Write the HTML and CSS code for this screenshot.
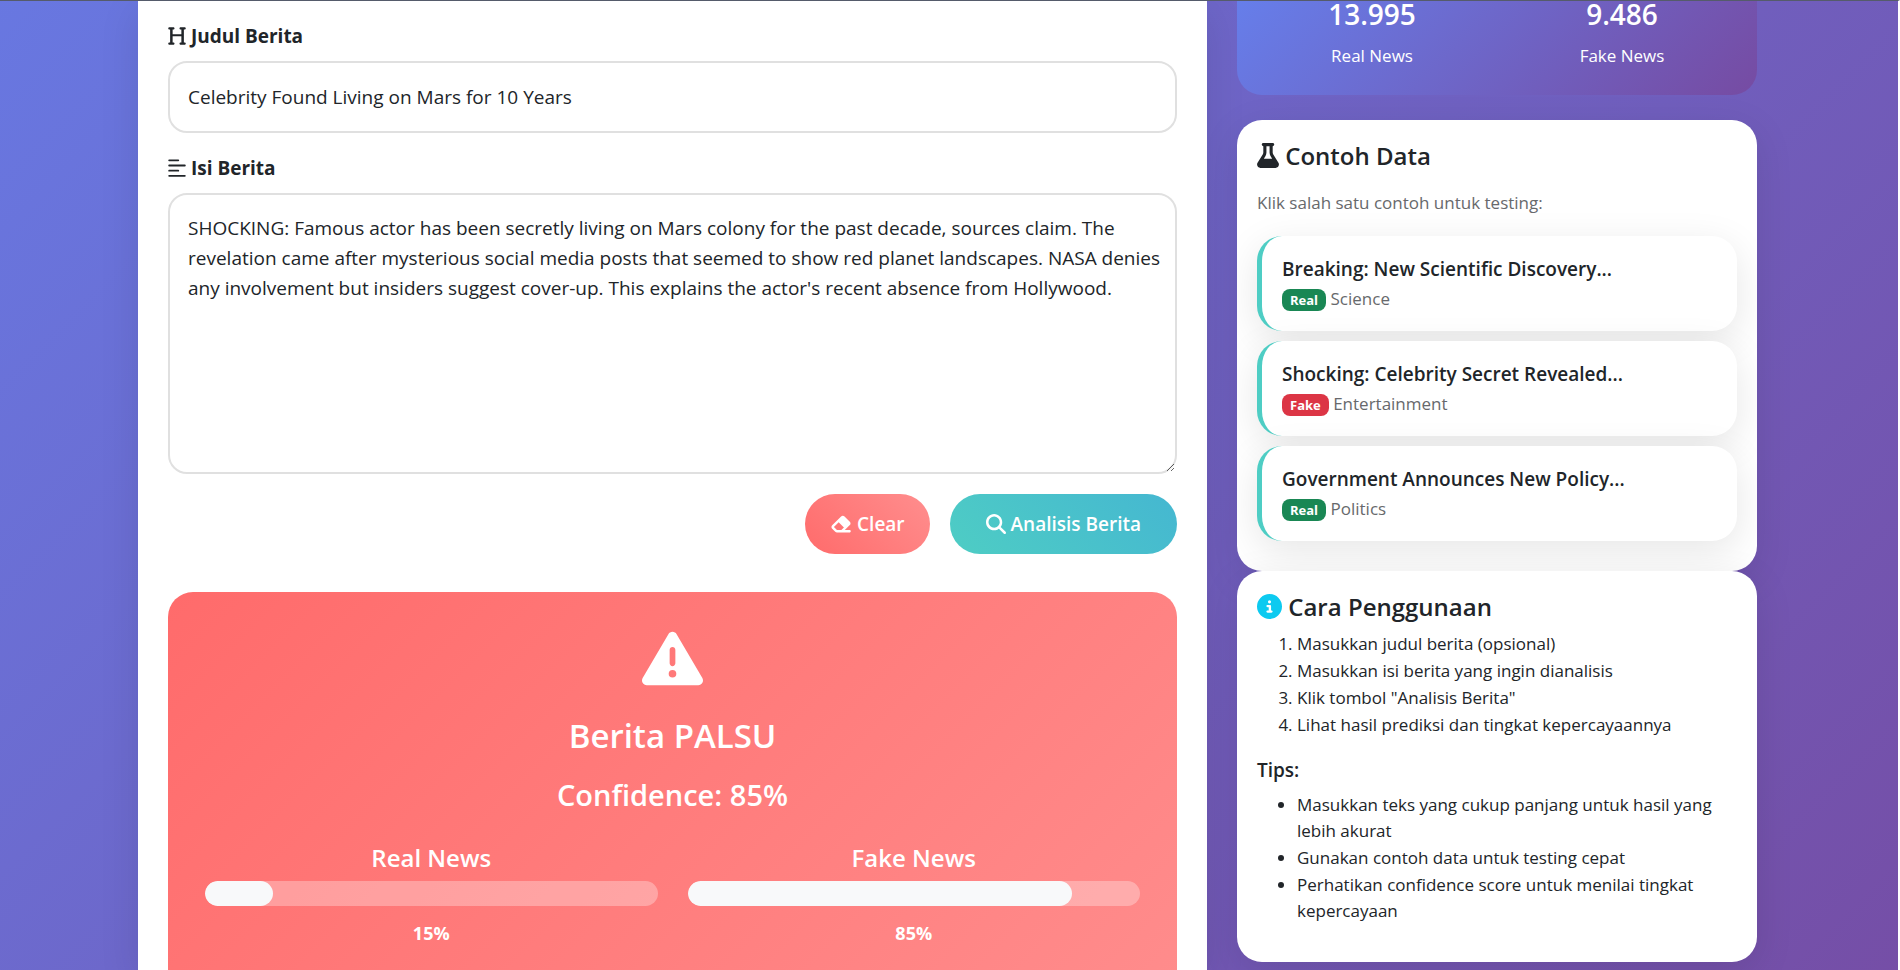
FILE: index.html
```html
<!DOCTYPE html>
<html lang="id">
<head>
<meta charset="utf-8">
<title>Deteksi Berita</title>
<link rel="stylesheet" href="styles.css">
</head>
<body>
<div class="layout">
  <main class="panel">
    <form class="form">
      <div class="field">
        <label class="label" for="title"><svg class="icon" viewBox="0 0 448 512"><path d="M0 64C0 46.300 14.300 32 32 32H80h48c17.700 0 32 14.300 32 32s-14.300 24-32 24H112V208H336V88H320c-17.700 0-32-6.300-32-24s14.300-32 32-32h48 48c17.700 0 32 14.300 32 32s-14.300 24-32 24H400V240 424h16c17.700 0 32 6.300 32 24s-14.300 32-32 32H368 320c-17.700 0-32-14.300-32-32s14.300-24 32-24h16V264H112V424h16c17.700 0 32 6.300 32 24s-14.300 32-32 32H80 32c-17.700 0-32-14.300-32-32s14.300-24 32-24H48V240 88H32C14.300 88 0 81.700 0 64z"/></svg> Judul Berita</label>
        <input class="control" id="title" type="text" value="Celebrity Found Living on Mars for 10 Years">
      </div>
      <div class="field">
        <label class="label" for="content"><svg class="icon" viewBox="0 0 448 512"><path d="M256 36a24 24 0 0 1 0 48H24a24 24 0 0 1 0-48zM256 300a24 24 0 0 1 0 48H24a24 24 0 0 1 0-48zM424 168a24 24 0 0 1 0 48H24a24 24 0 0 1 0-48zM424 432a24 24 0 0 1 0 48H24a24 24 0 0 1 0-48z"/></svg> Isi Berita</label>
        <textarea class="control area" id="content">SHOCKING: Famous actor has been secretly living on Mars colony for the past decade, sources claim. The revelation came after mysterious social media posts that seemed to show red planet landscapes. NASA denies any involvement but insiders suggest cover-up. This explains the actor's recent absence from Hollywood.</textarea>
      </div>
      <div class="actions">
        <button class="btn clear" type="button"><svg class="icon wide" viewBox="0 0 576 512"><path d="M290.700 57.400L57.400 290.700c-25 25-25 65.500 0 90.500l80 80c12 12 28.300 18.700 45.300 18.700H288h9.400H512c17.700 0 32-14.300 32-32s-14.300-32-32-32H387.900L518.600 285.300c25-25 25-65.500 0-90.500L381.300 57.400c-25-25-65.500-25-90.500 0zM297.400 416H288l-105.400 0-80-80L227.300 211.300 364.700 348.700 297.400 416z"/></svg> Clear</button>
        <button class="btn analyze" type="button"><svg class="icon round" viewBox="0 0 512 512"><path d="M416 208c0 45.900-14.900 88.300-40 122.700L502.600 457.400c12.500 12.500 12.500 32.800 0 45.300s-32.800 12.500-45.300 0L330.700 376c-34.400 25.200-76.800 40-122.700 40C93.100 416 0 322.900 0 208S93.100 0 208 0S416 93.100 416 208zM208 352a144 144 0 1 0 0-288 144 144 0 1 0 0 288z"/></svg> Analisis Berita</button>
      </div>
    </form>
    <section class="result">
      <svg class="warn" viewBox="0 0 512 512"><path d="M256 32c14.200 0 27.300 7.500 34.500 19.800l216 368c7.300 12.400 7.300 27.700 .2 40.100S486.300 480 472 480H40c-14.300 0-27.600-7.700-34.700-20.100s-7-27.800 .2-40.100l216-368C228.700 39.500 241.800 32 256 32zm0 128c-13.300 0-24 10.700-24 24V296c0 13.300 10.700 24 24 24s24-10.700 24-24V184c0-13.300-10.700-24-24-24zm32 224a32 32 0 1 0-64 0 32 32 0 1 0 64 0z"/></svg>
      <h2 class="verdict">Berita PALSU</h2>
      <h3 class="confidence">Confidence: 85%</h3>
      <div class="scores">
        <div class="score">
          <h4 class="score-name">Real News</h4>
          <div class="track"><div class="fill" style="width:15%"></div></div>
          <strong class="percent">15%</strong>
        </div>
        <div class="score">
          <h4 class="score-name">Fake News</h4>
          <div class="track"><div class="fill" style="width:85%"></div></div>
          <strong class="percent">85%</strong>
        </div>
      </div>
    </section>
  </main>
  <aside class="side">
    <section class="stats">
      <div class="stat"><h3 class="count">13.995</h3><p class="stat-name">Real News</p></div>
      <div class="stat"><h3 class="count">9.486</h3><p class="stat-name">Fake News</p></div>
    </section>
    <section class="card samples">
      <h4 class="heading"><svg class="icon" viewBox="0 0 448 512"><path d="M288 0H160 128C110.300 0 96 14.300 96 32s14.300 32 32 32V196.800c0 11.800-3.300 23.500-9.500 33.500L10.300 406.200C3.600 417.200 0 429.700 0 442.600C0 480.900 31.100 512 69.400 512H378.600c38.300 0 69.400-31.100 69.400-69.400c0-12.800-3.600-25.400-10.300-36.400L329.500 230.400c-6.200-10.100-9.500-21.700-9.500-33.500V64c17.700 0 32-14.300 32-32s-14.300-32-32-32H288zM192 196.800V64h64V196.800c0 23.700 6.600 46.900 19 67.100L309.500 320h-171L173 263.900c12.400-20.200 19-43.400 19-67.100z"/></svg> Contoh Data</h4>
      <p class="hint">Klik salah satu contoh untuk testing:</p>
      <article class="sample"><h5 class="sample-title">Breaking: New Scientific Discovery...</h5><p class="meta"><span class="badge real">Real</span> Science</p></article>
      <article class="sample"><h5 class="sample-title">Shocking: Celebrity Secret Revealed...</h5><p class="meta"><span class="badge fake">Fake</span> Entertainment</p></article>
      <article class="sample"><h5 class="sample-title">Government Announces New Policy...</h5><p class="meta"><span class="badge real">Real</span> Politics</p></article>
    </section>
    <section class="card guide">
      <h4 class="heading"><svg class="icon round info" viewBox="0 0 512 512"><path d="M256 512A256 256 0 1 0 256 0a256 256 0 1 0 0 512zM216 336h24V272H216c-13.300 0-24-10.700-24-24s10.700-24 24-24h48c13.300 0 24 10.700 24 24v88h8c13.300 0 24 10.700 24 24s-10.700 24-24 24H216c-13.300 0-24-10.700-24-24s10.700-24 24-24zm40-208a32 32 0 1 1 0 64 32 32 0 1 1 0-64z"/></svg> Cara Penggunaan</h4>
      <ol class="list">
        <li>Masukkan judul berita (opsional)</li>
        <li>Masukkan isi berita yang ingin dianalisis</li>
        <li>Klik tombol "Analisis Berita"</li>
        <li>Lihat hasil prediksi dan tingkat kepercayaannya</li>
      </ol>
      <h5 class="tips">Tips:</h5>
      <ul class="list">
        <li>Masukkan teks yang cukup panjang untuk hasil yang lebih akurat</li>
        <li>Gunakan contoh data untuk testing cepat</li>
        <li>Perhatikan confidence score untuk menilai tingkat kepercayaan</li>
      </ul>
    </section>
  </aside>
</div>
</body>
</html>
```
FILE: styles.css
```css
* { box-sizing: border-box; margin: 0; }

body {
  height: 100vh;
  overflow: hidden;
  border-top: 1px solid #555b6b;
  border-right: 2px solid #fff;
  background: linear-gradient(135deg, #667eea -16%, #764ba2 108%);
  color: #212529;
  font: 19px/30px "Open Sans", "Noto Sans", sans-serif;
}

.layout {
  display: grid;
  grid-template-columns: 1069fr 520fr;
  gap: 30px;
  width: 86%;
  max-width: 1622px;
  margin: 0 auto;
  padding-right: 3px;
}

.icon {
  width: 18px;
  height: 20px;
  fill: currentColor;
  vertical-align: -3px;
}

.panel {
  height: 100vh;
  overflow: hidden;
  padding: 20px 30px 0;
  background: #fff;
  box-shadow: 0 10px 38px rgba(0, 0, 0, .1);
}

.field { margin-bottom: 20px; }

.label {
  display: block;
  margin-bottom: 10px;
  font-weight: 700;
}

.control {
  display: block;
  width: 100%;
  height: 72px;
  padding: 18px;
  border: 2px solid #e0e0e0;
  border-radius: 19px;
  background: #fff;
  color: inherit;
  font: inherit;
}

.area { height: 281px; padding-right: 10px; resize: vertical; }

.actions {
  display: flex;
  justify-content: flex-end;
  gap: 20px;
}

.btn {
  height: 60px;
  padding: 0 25px;
  border: 0;
  border-radius: 30px;
  color: #fff;
  font: 600 19px/30px "Open Sans", "Noto Sans", sans-serif;
}

.clear { background: linear-gradient(45deg, #ff6b6b, #ff8e8e); }
.analyze { padding: 0 36px; background: linear-gradient(45deg, #4ecdc4, #45b7d1); }
.wide { width: 22px; }
.round { width: 20px; }

.result {
  height: 480px;
  margin-top: 38px;
  padding: 36px 37px;
  border-radius: 25px;
  background: linear-gradient(135deg, #ff6b6b, #ff8e8e);
  color: #fff;
  text-align: center;
}

.warn {
  display: block;
  width: 61px;
  height: 61px;
  margin: 0 auto 26px;
  fill: currentColor;
}

.verdict { margin-bottom: 20px; font-size: 33px; line-height: 42px; font-weight: 600; }
.confidence { margin-bottom: 30px; font-size: 29px; line-height: 36px; font-weight: 600; }

.scores {
  display: grid;
  grid-template-columns: 1fr 1fr;
  gap: 30px;
}

.score-name { margin-bottom: 8px; font-size: 24px; line-height: 30px; font-weight: 600; }
.track { height: 25px; margin-bottom: 12px; border-radius: 13px; background: rgba(255, 255, 255, .3); overflow: hidden; }
.fill { height: 100%; border-radius: 13px; background: #f8f9fa; }
.percent { display: block; font-size: 18px; line-height: 30px; }

.stats {
  display: grid;
  grid-template-columns: 1fr 1fr;
  height: 94px;
  margin-bottom: 25px;
  padding: 0 10px;
  border-radius: 0 0 25px 25px;
  background: linear-gradient(135deg, #667eea 0%, #764ba2 100%);
  color: #fff;
  text-align: center;
}

.count { height: 40px; font-size: 28px; line-height: 26px; font-weight: 600; }
.stat-name { font-size: 17px; line-height: 30px; }

.card {
  padding: 20px 20px 30px;
  border-radius: 25px;
  background: #fff;
  box-shadow: 0 10px 38px rgba(0, 0, 0, .1);
  overflow: hidden;
}

.heading { font-size: 24px; line-height: 32px; font-weight: 600; }
.heading .icon { width: 22px; height: 25px; }
.heading .round { width: 25px; }
.info { color: #0dcaf0; }
.hint { margin: 18px 0 20px; font-size: 17px; line-height: 26px; color: #67696c; }

.sample {
  margin-bottom: 10px;
  padding: 20px 20px 19px;
  border-left: 5px solid #4ecdc4;
  border-radius: 25px;
  background: #fff;
  box-shadow: 0 10px 38px rgba(0, 0, 0, .1);
}

.sample:last-child { margin-bottom: 0; }
.sample-title { margin-bottom: 2px; font-size: 19px; line-height: 27px; font-weight: 600; }
.meta { font-size: 17px; line-height: 27px; color: #67696c; }

.badge {
  display: inline-block;
  padding: 4px 8px;
  border-radius: 8px;
  color: #fff;
  font-size: 13px;
  line-height: 14px;
  font-weight: 700;
}

.real { background: #198754; }
.fake { background: #dc3545; }

.guide { padding-bottom: 38px; }
.list { margin: 8px 0 20px; padding-left: 40px; font-size: 17px; line-height: 26px; }
.list li + li { margin-top: 1px; }
.tips { margin-bottom: 10px; font-size: 19px; line-height: 24px; font-weight: 600; }
ul.list { margin-bottom: 0; }
```
